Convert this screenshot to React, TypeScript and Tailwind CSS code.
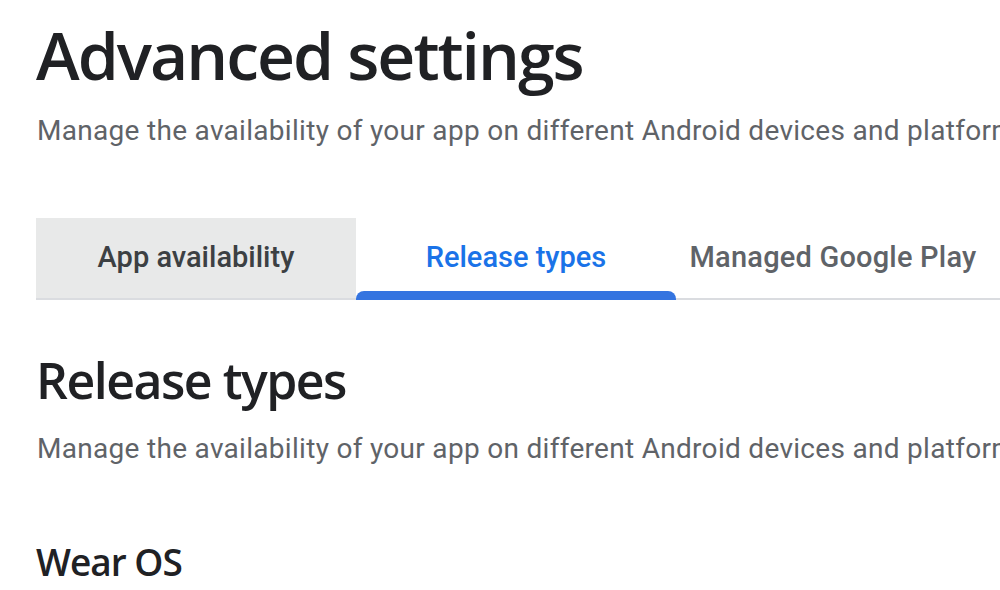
import React, { useState } from "react";

const tabs = ["App availability", "Release types", "Managed Google Play"];

const subtitle =
  "Manage the availability of your app on different Android devices and platforms";

const App: React.FC = () => {
  const [active, setActive] = useState(1);

  return (
    <div className="w-[1000px] h-[590px] overflow-hidden bg-white pl-[36px] font-['Roboto',sans-serif]">
      <h1 className="pt-[14px] text-[66px] leading-[80px] font-semibold text-[#202124] font-['Open_Sans',sans-serif] tracking-[-2px] whitespace-nowrap">
        Advanced settings
      </h1>
      <p className="mt-[18px] ml-px text-[28px] leading-[38px] text-[#5f6368] whitespace-nowrap tracking-[0.3px]">
        {subtitle}
      </p>

      {/* tab bar */}
      <div className="mt-[68px] flex h-[82px] border-b-2 border-[#dadce0]">
        {tabs.map((t, i) => {
          const isActive = i === active;
          const isFirst = i === 0;
          return (
            <button
              key={t}
              onClick={() => setActive(i)}
              className={
                "relative shrink-0 w-[320px] h-[80px] flex items-center justify-center text-[29px] font-medium whitespace-nowrap " +
                (isFirst ? "bg-[#e8e9e9] text-[#3c4043] " : "") +
                (isActive ? "text-[#1a73e8] " : !isFirst ? "text-[#5f6368] " : "")
              }
            >
              <span className={i === 2 ? "pr-[6px] tracking-[0.2px]" : ""}>{t}</span>
              {isActive && (
                <span className="absolute left-0 right-0 bottom-[-2px] h-[9px] rounded-t-[8px] bg-[#3474e0]" />
              )}
            </button>
          );
        })}
      </div>

      <h2 className="mt-[48px] text-[50px] leading-[64px] font-semibold text-[#202124] font-['Open_Sans',sans-serif] tracking-[-1.5px] whitespace-nowrap">
        Release types
      </h2>
      <p className="mt-[18px] ml-px text-[28px] leading-[38px] text-[#5f6368] whitespace-nowrap tracking-[0.3px]">
        {subtitle}
      </p>

      <h3 className="mt-[70px] text-[37px] leading-[48px] font-semibold text-[#202124] font-['Open_Sans',sans-serif] tracking-[-1px] whitespace-nowrap">
        Wear OS
      </h3>
    </div>
  );
};

export default App;
